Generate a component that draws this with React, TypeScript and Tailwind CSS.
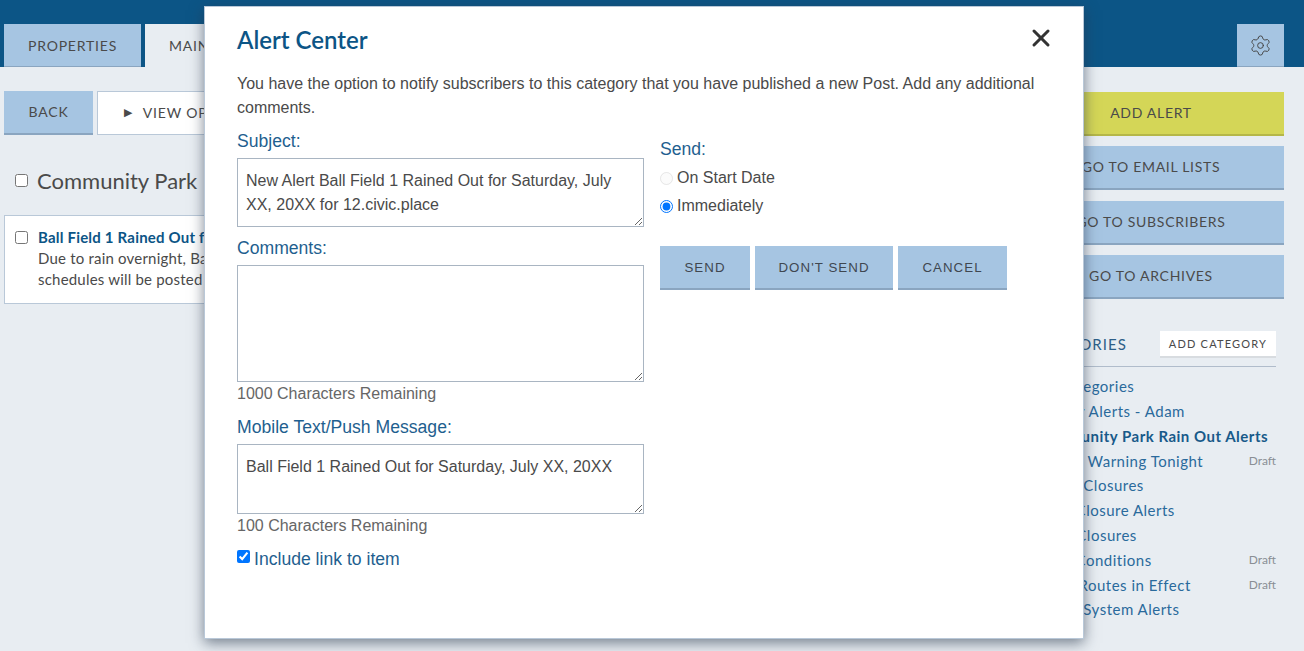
import { Settings, X } from 'lucide-react';

const sideButtons = [
  { label: 'GO TO EMAIL LISTS', gap: 'mt-[10px]' },
  { label: 'GO TO SUBSCRIBERS', gap: 'mt-[11px]' },
  { label: 'GO TO ARCHIVES', gap: 'mt-[10px]' },
];

const categories = [
  { name: 'All Categories' },
  { name: 'Winter Alerts - Adam' },
  { name: 'Community Park Rain Out Alerts', active: true },
  { name: 'Severe Warning Tonight', draft: true },
  { name: 'Beach Closures' },
  { name: 'Road Closure Alerts' },
  { name: 'River Closures' },
  { name: 'Road Conditions', draft: true },
  { name: 'Snow Routes in Effect', draft: true },
  { name: 'Water System Alerts' },
];

function AlertModal() {
  return (
    <div className="absolute left-[204px] top-[6px] w-[880px] h-[633px] bg-white border border-[#b9c8d8] shadow-[0_4px_13px_rgba(40,55,75,0.6)] px-[32px] font-['Liberation_Sans',sans-serif]">
      <div className="flex items-center justify-between h-[65px]">
        <h2 className="text-[24px] font-semibold text-[#0c5586] font-['Lato',sans-serif]">Alert Center</h2>
        <X className="w-[28px] h-[28px] text-[#333333] mr-[-4px] mb-[4px]" strokeWidth={2.6} />
      </div>
      <p className="text-[16px] leading-[24px] text-[#4a4a4a] w-[810px]">
        You have the option to notify subscribers to this category that you have published a new Post. Add any additional comments.
      </p>
      <div className="flex gap-4 mt-[9px]">
        <div className="w-[407px]">
          <label className="block text-[17.6px] leading-[24px] text-[#1f5f8f] mb-[5px]">Subject:</label>
          <textarea
            readOnly
            className="block w-full h-[69px] border border-[#a9b5c2] px-2 py-[10px] text-[16px] leading-[24px] text-[#4a4a4a] outline-none"
            value="New Alert Ball Field 1 Rained Out for Saturday, July XX, 20XX for 12.civic.place"
          />
          <label className="block text-[17.6px] leading-[24px] text-[#1f5f8f] mt-[9px] mb-[5px]">Comments:</label>
          <textarea readOnly className="block w-full h-[117px] border border-[#a9b5c2] outline-none" />
          <div className="text-[16px] leading-[24px] text-[#666666]">1000 Characters Remaining</div>
          <label className="block text-[17.6px] leading-[24px] text-[#1f5f8f] mt-[9px] mb-[5px]">Mobile Text/Push Message:</label>
          <textarea
            readOnly
            className="block w-full h-[70px] border border-[#a9b5c2] px-2 py-[10px] text-[16px] leading-[24px] text-[#4a4a4a] outline-none"
            value="Ball Field 1 Rained Out for Saturday, July XX, 20XX"
          />
          <div className="text-[16px] leading-[24px] text-[#666666]">100 Characters Remaining</div>
          <label className="flex items-start mt-[9px] text-[17.6px] leading-[24px] text-[#1f5f8f]">
            <input type="checkbox" defaultChecked className="w-[13px] h-[13px] mt-[3px] mr-[4px]" />
            Include link to item
          </label>
        </div>
        <div className="pt-[8px]">
          <div className="text-[17.6px] leading-[24px] text-[#1f5f8f]">Send:</div>
          <label className="flex items-center h-[28px] mt-[3px] text-[16px] text-[#4a4a4a]">
            <input type="radio" name="send" disabled className="w-[13px] h-[13px] mr-[4px] opacity-50" />
            On Start Date
          </label>
          <label className="flex items-center h-[28px] text-[16px] text-[#4a4a4a]">
            <input type="radio" name="send" defaultChecked className="w-[13px] h-[13px] mr-[4px]" />
            Immediately
          </label>
          <div className="flex gap-[5px] mt-[26px]">
            <button className="w-[90px] h-[44px] pt-[1px] bg-[#a6c5e2] border-b-2 border-[#8aa5c0] text-[13.3px] tracking-[1.05px] text-[#3f4750]">SEND</button>
            <button className="w-[138px] h-[44px] pt-[1px] bg-[#a6c5e2] border-b-2 border-[#8aa5c0] text-[13.3px] tracking-[1.05px] text-[#3f4750]">DON'T SEND</button>
            <button className="w-[109px] h-[44px] pt-[1px] bg-[#a6c5e2] border-b-2 border-[#8aa5c0] text-[13.3px] tracking-[1.05px] text-[#3f4750]">CANCEL</button>
          </div>
        </div>
      </div>
    </div>
  );
}

export default function App() {
  return (
    <div className="relative w-[1304px] h-[651px] overflow-hidden bg-[#e8edf2] font-['Lato',sans-serif] text-[#4a4a4a]">
      {/* Top bar with tabs */}
      <div className="flex items-end justify-between h-[67px] bg-[#0c5586] pl-1 pr-5">
        <div className="flex gap-1">
          <div className="flex items-center justify-center w-[137px] h-[43px] bg-[#a6c5e2] border-b border-[#8aa5c0] text-[14px] tracking-[0.8px]">PROPERTIES</div>
          <div className="flex items-center pl-6 w-[180px] h-[43px] bg-[#e8edf2] text-[14px] tracking-[0.8px]">MAIN</div>
        </div>
        <div className="flex items-center justify-center w-[47px] h-[43px] bg-[#a6c5e2] border-b border-[#8aa5c0]">
          <Settings className="w-[23px] h-[23px] text-[#444444]" strokeWidth={1} />
        </div>
      </div>

      <div className="flex justify-between pl-1 pr-5">
        {/* Left column */}
        <div className="w-[900px] pt-6">
          <div className="flex gap-1">
            <div className="flex items-center justify-center w-[89px] h-[44px] pb-[2px] bg-[#a6c5e2] border-b-2 border-[#8aa5c0] text-[14px] tracking-[0.8px]">BACK</div>
            <div className="flex items-center pl-[26px] w-[200px] h-[44px] pb-[2px] bg-white border border-[#b9c8d8] text-[14px] tracking-[0.8px]">
              <span className="text-[11px] mr-[10px]">▶</span>VIEW OPTIONS
            </div>
          </div>
          <div className="flex items-center mt-[31px] h-[28px] pl-[11px]">
            <input type="checkbox" className="w-[13px] h-[13px] mr-[9px]" />
            <span className="text-[22px]">Community Park Rain Out Alerts</span>
          </div>
          <div className="flex mt-[21px] h-[89px] bg-white border border-[#b9c8d8] pl-[10px] pt-[11px]">
            <input type="checkbox" className="w-[13px] h-[13px] mt-[4px] mr-[10px]" />
            <div className="text-[15px] leading-[21px] tracking-[0.2px]">
              <div className="font-bold text-[#0c5586]">Ball Field 1 Rained Out for Saturday</div>
              <div>Due to rain overnight, Ball Field 1 is closed today.</div>
              <div>schedules will be posted soon.</div>
            </div>
          </div>
        </div>

        {/* Right column */}
        <div className="w-[266px] pt-[25px]">
          <div className="flex items-center justify-center h-[44px] pb-[2px] bg-[#d4d657] border-b-2 border-[#b5b748] text-[14px] tracking-[0.7px]">ADD ALERT</div>
          {sideButtons.map((b) => (
            <div key={b.label} className={`flex items-center justify-center h-[44px] pb-[2px] bg-[#a6c5e2] border-b-2 border-[#8aa5c0] text-[14px] tracking-[0.7px] ${b.gap}`}>{b.label}</div>
          ))}
          <div className="mr-2">
            <div className="flex items-center justify-between mt-[32px] h-[36px] border-b border-[#b0bccb] pb-[8px]">
              <span className="pl-[9px] text-[15px] tracking-[1px] text-[#2d5f88]">CATEGORIES</span>
              <span className="flex items-center justify-center w-[116px] h-[27px] pt-[1px] bg-white border-b-2 border-[#d8dce0] text-[11px] tracking-[1.2px]">ADD CATEGORY</span>
            </div>
            <ul className="pt-[7px] pl-[18px]">
              {categories.map((c) => (
                <li key={c.name} className="flex items-center justify-between h-[24.8px]">
                  <span className={`text-[15px] tracking-[0.5px] ${c.active ? 'font-bold text-[#185a8a]' : 'text-[#2a6a9c]'}`}>{c.name}</span>
                  {c.draft && <span className="text-[12px] text-[#8a8f95]">Draft</span>}
                </li>
              ))}
            </ul>
          </div>
        </div>
      </div>

      <AlertModal />
    </div>
  );
}
